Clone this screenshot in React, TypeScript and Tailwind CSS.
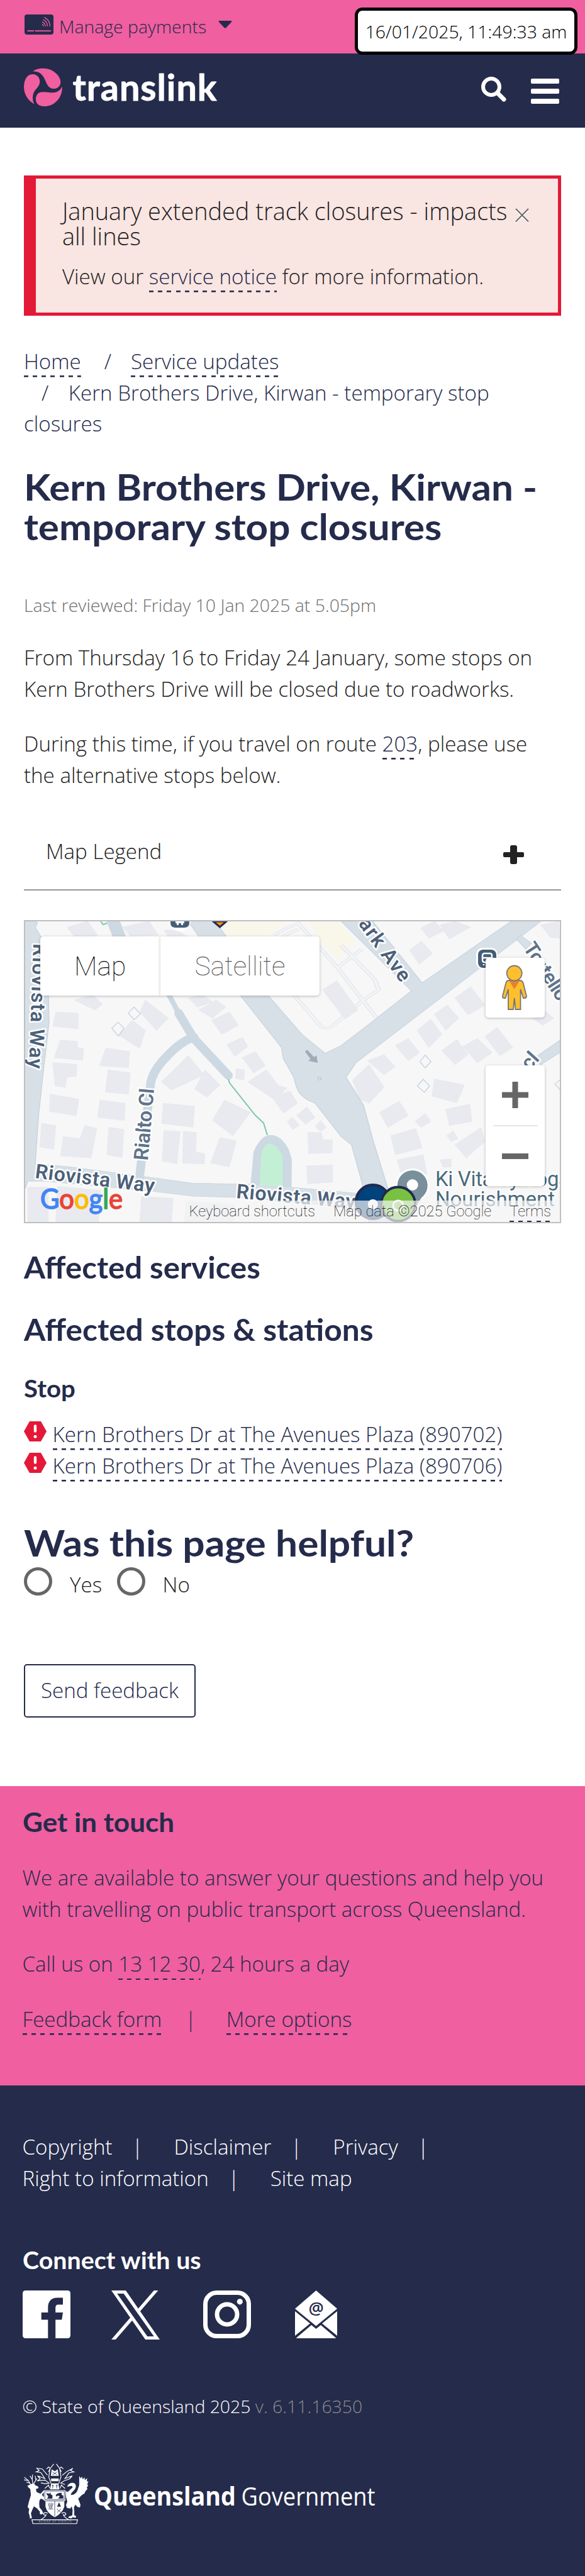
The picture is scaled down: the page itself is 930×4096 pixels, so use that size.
import type { ReactNode } from "react";

const sans = "font-['Open_Sans',sans-serif] font-light";
const display = "w-max origin-left font-[Lato,'Open_Sans',sans-serif] font-bold whitespace-nowrap";

function Link({ children, className = "" }: { children: ReactNode; className?: string }) {
  return (
    <a
      href="#"
      className={`bg-[repeating-linear-gradient(90deg,#252b4b_0_7px,transparent_7px_14.2px)] bg-[length:100%_2.6px] bg-bottom bg-no-repeat pb-[3px] text-[#252b4b] ${className}`}
    >
      {children}
    </a>
  );
}

function TopBar() {
  return (
    <div className="relative flex h-[85.2px] bg-[#f05fa0] pl-[39px] text-[#252b4b]">
      <svg className="mt-[23px] h-8 w-[46px] shrink-0" viewBox="0 0 46 32">
        <rect width="46" height="32" rx="4" fill="#252b4b" />
        <path d="M4.5 26.2H15M16.5 26.2H42" stroke="#f05fa0" strokeWidth="1.8" />
        <path
          d="M28 15.2q2 1.6 2 3.6M28 11.6q5 2.6 5 7.2M29.5 8q7 3.6 7 10.8M31.5 4.600q9 4.600 9 14.200"
          fill="none"
          stroke="#f05fa0"
          strokeWidth="1.4"
        />
      </svg>
      <span className="ml-[9px] pt-[21px] text-[28.4px] leading-[42px]">Manage payments</span>
      <svg className="mt-[33px] ml-[19px] h-3 w-[22px]" viewBox="0 0 22 12">
        <path d="M1.500 0H20.500Q22 .5 21 2L12.500 11Q11 12.500 9.500 11L1 2Q0 .5 1.500 0Z" fill="#252b4b" />
      </svg>
      <div className="absolute top-[12px] left-[564px] z-10 flex h-[75px] w-[354px] items-center justify-center rounded-[12px] border-[5px] border-black bg-white text-[28.4px] leading-[42px] whitespace-nowrap text-black">
        16/01/2025, 11:49:33 am
      </div>
    </div>
  );
}

function Header() {
  return (
    <header className="flex h-[118.2px] bg-[#252b4b] pl-[37px]">
      <svg className="mt-[21.500px] h-[80px] w-[320px]" viewBox="0 0 320 80">
        <g transform="scale(.263) translate(-50 -45)" fill="#f05fa0">
          <path d="M108 70C130 50 190 42 230 68C262 88 279 118 275 142C270 170 240 180 220 172C195 165 190 135 175 108C160 82 140 68 108 70Z" />
          <path d="M117 268C85 250 54 215 54 165C54 120 75 87 105 87C135 87 152 110 150 135C148 160 125 175 115 195C105 215 104 245 117 268Z" />
          <path d="M285 160C288 210 262 250 225 270C195 284 150 288 132 262C118 235 128 205 150 197C180 188 215 203 240 197C262 192 278 180 285 160Z" />
        </g>
        <text
          x="78.500"
          y="53"
          textLength="229"
          className="font-[Lato] font-bold"
          fontSize="57.500"
          fill="#fff"
          stroke="#fff"
          strokeWidth="0.800"
          strokeLinejoin="round"
        >
          translink
        </text>
      </svg>
      <svg className="mt-[36.500px] ml-[408px] h-10 w-10" viewBox="0 0 40 40" fill="none" stroke="#fff" strokeLinecap="round">
        <circle cx="16" cy="16" r="13" strokeWidth="6" />
        <path d="M27 27L36 36" strokeWidth="7" />
      </svg>
      <div className="mt-[39.500px] ml-[39px] flex w-[45px] flex-col gap-2">
        <span className="h-2 rounded-[2px] bg-white" />
        <span className="h-2 rounded-[2px] bg-white" />
        <span className="h-2 rounded-[2px] bg-white" />
      </div>
    </header>
  );
}

function Alert() {
  return (
    <section className="relative mt-[76px] h-[222.500px] border-[5px] border-l-[19px] border-[#e31937] bg-[#f9e5e2] pt-[31.200px] pl-[42px] whitespace-nowrap text-[#222]">
      <p className="text-[37.860px] leading-[40.700px]">
        January extended track closures - impacts
        <br />
        all lines
      </p>
      <p className="mt-[18px] text-[33.120px] leading-[49.700px]">
        View our <Link>service notice</Link> for more information.
      </p>
      <svg className="absolute top-[47px] right-[46px] h-6 w-[22px]" viewBox="0 0 22 24" fill="none" strokeWidth="1.800">
        <path d="M1 3.500L21 23.500M21 3.500L1 23.500" stroke="#fff" />
        <path d="M1 1L21 21.500M21 1L1 21.500" stroke="#666" />
      </svg>
    </section>
  );
}

const homes =
  "180,72 235,42 262,110 210,140|165,130 215,110 240,160 190,190|200,430 250,405 275,450 255,480|390,430 452,520 420,580 375,490|355,530 390,580 375,670 320,605|150,490 210,495 210,572 142,560|162,628 208,635 208,665 225,670 222,728 146,715|284,668 348,685 345,765 267,755|142,740 207,748 205,808 180,810 175,862 148,855|290,775 350,790 345,895 283,885|135,895 212,920 205,1002 133,980|268,925 336,940 334,1025 262,1010|438,940 522,955 518,1058 434,1040|505,705 548,800 460,875 433,835|550,775 590,850 555,910 522,870|602,925 672,985 625,1100 570,1025|112,1040 150,1050 145,1168 107,1155|228,1050 260,1065 245,1210 163,1200 170,1105 215,1115|292,1058 333,1070 328,1208 287,1195|440,1075 483,1080 475,1240 435,1225|492,1078 527,1085 525,1180 550,1190 548,1240 490,1235|590,1110 634,1125 615,1255 565,1235|633,770 656,775 654,825 632,818|665,835 715,775 745,850 770,865 738,925|730,910 778,880 798,940 760,990|770,1030 785,1010 803,1050 785,1070|795,1000 823,958 845,1010 820,1045|845,1055 860,1025 875,1060 860,1080|825,1085 862,1085 866,1120 892,1122 890,1185 828,1188|822,1250 892,1245 892,1330 825,1338|650,715 685,685 712,755 680,790|608,650 650,615 665,660 630,710|568,530 615,490 640,555 595,600|533,480 580,430 606,465 570,520|505,420 545,405 570,440 530,465|865,380 903,335 960,480 925,525|945,825 990,750 1030,860 990,940 965,920|985,730 1030,700 1060,760 1030,800|1060,655 1095,620 1125,690 1095,730|1118,580 1155,525 1185,600 1150,665|1165,500 1200,455 1230,520 1195,580|1220,420 1262,365 1300,455 1255,505|1165,820 1245,850 1225,938 1158,905|1018,985 1070,930 1095,1000 1040,1060|1113,1030 1140,990 1155,1030 1130,1060|1195,970 1260,945 1265,1030 1205,1050|1048,1100 1115,1065 1132,1160 1060,1195|1220,1145 1290,1060 1300,1130 1250,1210|1065,1220 1135,1195 1145,1290 1080,1310|1198,1100 1215,1075 1228,1115 1210,1130|1185,680 1225,625 1255,700 1220,750|1240,660 1280,620 1320,690 1280,740|1300,610 1333,565 1375,665 1340,705|1128,75 1165,42 1190,90 1150,125|1180,60 1220,42 1262,70 1205,130|1098,185 1130,140 1160,200 1125,255|1450,60 1498,42 1500,125 1475,120|1395,480 1430,440 1485,520 1455,555|330,70 400,42 425,110 350,115|440,85 475,85 500,115 450,115|155,1350 270,1370 265,1525 150,1525|380,1400 465,1410 460,1525 375,1525|500,1425 630,1440 625,1525 495,1525|75,1355 130,1355 130,1525 75,1525|1180,1220 1210,1215 1210,1255 1188,1255";

function GoogleMap() {
  return (
    <section className="relative mt-[47.200px] h-[482px] overflow-hidden border-2 border-[#bfbfbf] bg-[#f7f7f7]">
      <svg className="block h-full w-full" viewBox="0 0 850 478" preserveAspectRatio="none">
        <g transform="matrix(.5931 0 0 .322 -40.300 -13.500)">
          <g fill="#f9f6ea">
            <path d="M590 42H765L735 100L700 115H610Z" />
            <path d="M830 42H905L952 135L905 228L850 112Z" />
          </g>
          <g fill="none" stroke="#e0e2e8" strokeWidth="12">
            <path d="M735 110L770 75L800 52L905 270L970 180M790 409L860 560Q880 585 900 545L975 430L1015 380L1005 330L915 160M905 270L1010 520M800 80L760 115" />
          </g>
          <g fill="none" stroke="#f3f4f6" strokeWidth="8">
            <path d="M735 110L770 75L800 52L905 270L970 180M790 409L860 560Q880 585 900 545L975 430L1015 380L1005 330L915 160M905 270L1010 520M800 80L760 115" />
          </g>
          <g fill="#e8eaf0" stroke="#e0e2ea" strokeWidth="1">
            {homes.split("|").map((p) => (
              <polygon key={p} points={p} />
            ))}
          </g>
          <g fill="#d7e0e7" stroke="#c4d0db" strokeWidth="2">
            <path d="M505 42L645 409L755 665L760 720L788 812L795 860Q805 915 845 940L915 1105L943 1147L972 1340L990 1540H1065L1040 1360L1000 1120L975 950L928 812L955 740L1450 42H1370L1132 345L1000 42H915L1103 385L1000 535L915 655L872 693L810 600L720 409L578 42Z" />
            <path d="M60 42H103L95 72L128 170L132 540L118 760L104 1000L95 1238L190 1255L400 1305L515 1335L680 1340L780 1355L960 1385V1465L800 1430L640 1405L520 1400L410 1375L120 1325L75 1325L60 1400Z" />
            <path d="M1395 110L1425 150L1410 180L1385 130ZM1500 630L1430 720L1450 750L1510 680Z" />
          </g>
          <path d="M672 1345L680 1180Q700 1097 725 1097Q755 1097 775 1170L783 1220L782 1355Z" fill="#cdd9e2" />
          <path d="M697 1347L700 1210Q705 1140 724 1140Q742 1140 758 1205V1349Z" fill="#c3f0d5" />
          <g fill="#f7f7f7" stroke="#c9d5e3" strokeWidth="3">
            <path d="M360 465L377 500L360 527L344 495ZM317 540L333 570L318 608L300 570ZM1140 702L1156 735L1140 765L1126 735ZM1135 822L1152 855L1138 886L1119 855ZM1505 820L1488 845L1505 880Z" />
          </g>
          <path d="M818 685L824 676L842 712L849 704L852 741L826 730L833 722Z" fill="#a3a9b8" />
          <ellipse cx="857" cy="818" rx="4" ry="8" fill="none" stroke="#b8c2d0" strokeWidth="2" />
        </g>
        <g fill="none" stroke="#cdd9e2" strokeLinecap="round" strokeLinejoin="round">
          <path d="M138 -5L150 25" strokeWidth="20" />
          <path d="M227 114L244 146" strokeWidth="8" />
          <path d="M244 146L268 186L323 245" strokeWidth="14" />
          <path d="M268 184Q246 192 226 214Q200 240 199 262L182 405" strokeWidth="14" />
        </g>
        <path d="M323 251L325 257L366 308.500L379 320.500L385 340" fill="none" stroke="#7cc8a8" strokeWidth="2" />
        <path d="M120 0L124 5L130 3" fill="none" stroke="#7cc8a8" strokeWidth="2" />

        <circle cx="246" cy="-1" r="17" fill="#fff" />
        <path d="M231 0H261V2Q261 10 253 10H239Q231 10 231 2Z" fill="#455d78" />
        <path d="M239 0H253V3H251V6H248V3H244V6H241V3H239Z" fill="#fff" />
        <path d="M299 0L309.500 9L320 0Z" fill="#f7941d" stroke="#252b4b" strokeWidth="3" />
        <rect x="717" y="42" width="34" height="34" rx="10" fill="#fff" />
        <rect x="720" y="45" width="29" height="29" rx="8" fill="#455d78" />
        <rect x="727" y="51" width="15" height="14" rx="3" fill="none" stroke="#fff" strokeWidth="2.500" />
        <path d="M728 58H741M729 68V70M740 68V70" stroke="#fff" strokeWidth="2.500" />

        <g
          className="font-[Roboto]"
          fontWeight="600"
          fontSize="32"
          fill="#4c6078"
          stroke="#fff"
          strokeWidth="5"
          strokeLinejoin="round"
          paintOrder="stroke"
        >
          <text transform="translate(13 35) rotate(92)" textLength="199">Riovista Way</text>
          <text transform="translate(195 381) rotate(-85)" textLength="115" fill="#5f7389">Rialto Cl</text>
          <text transform="translate(15 408) rotate(7)" textLength="191">Riovista Way</text>
          <text transform="translate(335 440) rotate(5)" textLength="190">Riovista Way</text>
          <text transform="translate(516 -14) rotate(54)" textLength="139">Park Ave</text>
          <text transform="translate(791 42) rotate(57)" textLength="138" fill="#5f7389">Tortello Cl</text>
          <text transform="translate(802 238) rotate(-48)" fill="#5f7389">cl</text>
          <text transform="translate(20 -6) rotate(30)" fontSize="18">y</text>
        </g>

        <circle cx="615.700" cy="420" r="27" fill="#fff" />
        <circle cx="615.700" cy="420" r="24" fill="#7a8f9c" />
        <path d="M600 436L616 462L632 436Z" fill="#7a8f9c" />
        <circle cx="615.700" cy="419" r="9" fill="#fff" />
        <g className="font-[Roboto]" fontSize="33" fontWeight="400" fill="#4b6b7a" stroke="#fff" strokeWidth="4" strokeLinejoin="round" paintOrder="stroke">
          <text x="652" y="421" textLength="214">Ki Vitality Yoga</text>
          <text x="652" y="453" textLength="190">Nourishment</text>
        </g>
        <g stroke="#1f2a4d" strokeWidth="4">
          <circle cx="552.800" cy="446" r="27" fill="#00427c" />
          <circle cx="593" cy="449.500" r="27" fill="#7ac143" />
        </g>
        <circle cx="552.800" cy="450" r="8" fill="#fff" />
        <circle cx="593" cy="452" r="8" fill="none" stroke="#fff" strokeWidth="3" />

        <text className="font-[Lato]" x="24" y="457" fontSize="44" fontWeight="400" strokeWidth="1.600" textLength="131" lengthAdjust="spacingAndGlyphs">
          <tspan fill="#4285f4" stroke="#4285f4">G</tspan>
          <tspan fill="#ea4335" stroke="#ea4335">o</tspan>
          <tspan fill="#fbbc05" stroke="#fbbc05">o</tspan>
          <tspan fill="#4285f4" stroke="#4285f4">g</tspan>
          <tspan fill="#34a853" stroke="#34a853">l</tspan>
          <tspan fill="#ea4335" stroke="#ea4335">e</tspan>
        </text>
      </svg>

      <div className="absolute top-[24px] left-[24px] flex h-[94px] font-[Roboto] text-[42.600px] leading-[94px] font-thin">
        <div className="w-[190.500px] rounded-l-[5px] bg-white pl-[54px] text-black shadow-[0_1px_4px_rgba(0,0,0,0.25)]">Map</div>
        <div className="w-[253px] rounded-r-[5px] bg-white pl-[55px] text-[#565656] shadow-[0_1px_4px_rgba(0,0,0,0.25)]">Satellite</div>
      </div>

      <div className="absolute top-[58.500px] right-[24px] h-[95px] w-[94px] rounded-[5px] bg-white shadow-[0_1px_4px_rgba(0,0,0,0.25)]">
        <svg className="h-full w-full" viewBox="0 0 94 95">
          <path
            d="M37 36H54Q59 36 60 41L65 61Q65 64 62 64H60L55.500 50V82H47.500L45.800 64L44 82H36V50L31.500 64H29Q26.500 64 27 61L32 41Q33 36 37 36Z"
            fill="#fdbf2d"
            stroke="#767676"
            strokeWidth="1.800"
          />
          <path d="M37.500 36.500H54L45.700 50Z" fill="#e4812f" />
          <circle cx="45.700" cy="24.500" r="12" fill="#fdbf2d" stroke="#767676" strokeWidth="1.800" />
        </svg>
      </div>

      <div className="absolute top-[229px] right-[24px] flex h-[192px] w-[94px] flex-col items-center rounded-[5px] bg-white shadow-[0_1px_4px_rgba(0,0,0,0.25)]">
        <svg className="h-[95px] w-full" viewBox="0 0 94 95" stroke="#666" strokeWidth="9">
          <path d="M26 47H68M47 26V68" />
        </svg>
        <div className="h-[2px] w-[71px] bg-[#e6e6e6]" />
        <svg className="h-[95px] w-full" viewBox="0 0 94 95" stroke="#666" strokeWidth="9">
          <path d="M26 47.500H68" />
        </svg>
      </div>

      <div className="absolute right-0 bottom-0 flex h-[34px] gap-[29px] bg-[#f5f5f5]/70 pr-[14px] pl-[10px] font-[Roboto] text-[23.660px] leading-[35px] font-thin whitespace-nowrap text-black">
        <span>Keyboard shortcuts</span>
        <span>Map data ©2025 Google</span>
        <span className="bg-[repeating-linear-gradient(90deg,#252b4b_0_7px,transparent_7px_14.200px)] bg-[length:100%_2px] bg-bottom bg-no-repeat">Terms</span>
      </div>
    </section>
  );
}

function AlertHexagon() {
  return (
    <svg className="mt-[4px] h-8 w-9 shrink-0" viewBox="0 0 36 32">
      <path d="M9 0H27L36 16L27 32H9L0 16Z" fill="#e31937" />
      <path d="M18 7.500V15.500" stroke="#fff" strokeWidth="4.400" strokeLinecap="round" />
      <circle cx="18" cy="24.300" r="2.500" fill="#fff" />
    </svg>
  );
}

function StopRow({ name }: { name: string }) {
  return (
    <li className="flex h-[49.700px]">
      <AlertHexagon />
      <span className="ml-[9.500px] whitespace-nowrap">
        <Link>{name}</Link>
      </span>
    </li>
  );
}

function Bar() {
  return <span className="mr-[49px] ml-[31px]">|</span>;
}

function SocialIcons() {
  return (
    <div className="mt-[23px] flex h-[78px] items-start">
      <svg className="h-[76px] w-[76px]" viewBox="0 0 76 76">
        <rect width="76" height="76" rx="4.500" fill="#fff" />
        <path d="M40.300 76V46.500H29.700V35H40.300V27C40.300 17 46 11.600 55 11.600H64V22.500H57C53.500 22.500 52.200 24.500 52.200 28V35H64L62.300 46.500H52.200V76Z" fill="#252b4b" />
      </svg>
      <svg className="ml-[65px] h-[78px] w-[77px]" viewBox="0 0 1200 1227" preserveAspectRatio="none" fill="#fff">
        <path d="M714.163 519.284L1160.890 0H1055.030L667.137 450.887L357.328 0H0L468.492 681.821L0 1226.370H105.866L515.491 750.218L842.672 1226.370H1200L714.137 519.284H714.163ZM569.165 687.828L521.697 619.934L144.011 79.694H306.615L611.412 515.685L658.880 583.579L1055.080 1150.300H892.476L569.165 687.854V687.828Z" />
      </svg>
      <svg className="ml-[69px] h-[76px] w-[76px]" viewBox="0 0 76 76" fill="none" stroke="#fff">
        <rect x="3.500" y="3.500" width="69" height="69" rx="18" strokeWidth="7" />
        <circle cx="38" cy="38" r="16" strokeWidth="7" />
        <circle cx="58.300" cy="17.800" r="4.600" fill="#fff" stroke="none" />
      </svg>
      <svg className="ml-[70px] h-[76px] w-[67px]" viewBox="0 0 67 76" fill="#fff">
        <path d="M33.500 0L67 29L33.500 56.500L0 29Z" />
        <path d="M0 33V72L24 52.500ZM67 33V72L43 52.500ZM2.500 76Q2 75.500 2.500 75L26 55L33.500 61L41 55L64.500 75Q65 75.500 64.500 76Z" />
        <text x="33.500" y="37.500" textAnchor="middle" fontSize="27" fontWeight="600" fill="#252b4b" className="font-['Open_Sans']">
          @
        </text>
      </svg>
    </div>
  );
}

function CoatOfArms() {
  return (
    <svg className="h-[98.600px] w-[106.500px] shrink-0" viewBox="50 45 405 375">
      <g fill="#fff">
        <path d="M79 184L104 172L118 170L128 182L143 188L146 197L136 203L130 201L134 222L158 232L176 212L181 220L166 238L178 252L184 260L182 270L160 262L152 272L150 292L152 315L166 332L176 352L160 358L152 350L156 343L136 320L118 308L108 330L100 350L106 380L94 382L92 365L86 345L90 325L80 312L88 280L100 240L96 204L84 193Z" />
        <path d="M318 190Q330 165 352 166Q372 168 372 188Q370 206 352 220Q340 232 342 240Q372 238 382 210L392 180L392 125L402 140L408 128L414 146L424 132L426 150L440 138L438 158L448 156L440 176L446 180L438 196L442 204L430 216L424 230L408 240L386 262L400 300L396 315L382 312L368 298L360 316L362 340L362 362L374 368L370 378L352 374L344 382L326 378L328 370L350 364L352 330L346 308L338 322L318 318L312 300L320 280L312 250L310 215L322 222L334 210L352 194Q350 182 340 186Z" />
        <path d="M178 210H308V274H302V310Q290 350 244 374Q198 350 188 310V274H178Z" />
        <path d="M222 170H266L272 206H216ZM222 140H268V156H222ZM226 84L244 96L262 84L268 124H220Z" />
      </g>
      <g fill="none" stroke="#fff" strokeWidth="4.500">
        <path d="M98 176L84 152L60 132M84 152L58 148M94 168L72 162M112 172L108 146L94 124M108 146L110 116M118 170L130 150L126 124M130 150L136 140" />
        <path d="M238 52L216 80L208 130L222 170M254 52L274 80L282 130L268 170M194 82L208 70L216 80L206 100M296 82L282 70L274 80L284 100" />
        <path d="M200 120L168 82L136 78L150 92L132 100L160 104L184 140L140 124L156 142L138 154L186 150L210 168L186 172L160 166M290 120L320 96L354 78L340 92L360 100L330 106L306 140L350 124L334 142L300 154L280 168L306 176M184 200L206 180L214 200M306 200L284 180L276 200" />
        <path d="M202 350Q184 340 176 354Q180 366 192 360Q184 378 160 388M286 350Q304 340 312 354Q308 366 296 360Q304 378 328 388" />
        <path d="M106 390H382L376 413H112Z" />
      </g>
      <g fill="none" stroke="#252b4b" strokeWidth="3">
        <path d="M184 216H302V268H184ZM190 276H300M244 276V368M232 176V200M226 184H238M256 176V200M250 184H262M220 134H268M222 160H268M230 100L258 118M258 100L230 118" />
        <path d="M206 290L212 318H226L234 290M214 286L218 312M226 286L222 312M206 324H234M256 324L282 346M282 324L258 346" />
      </g>
      <g fill="#252b4b">
        <path d="M194 226Q206 236 222 226Q214 240 230 240V262H196Q206 256 204 246Q194 240 194 226ZM250 240Q264 222 290 228Q276 236 296 244V262H262Q276 254 272 246Q260 240 254 250Z" />
        <path d="M270 284L282 310H258Z" />
      </g>
      <text x="146" y="408" fontSize="19" textLength="200" fill="#fff" opacity=".8" className="font-['Open_Sans']">
        AUDAX AT FIDELIS
      </text>
    </svg>
  );
}

export default function App() {
  return (
    <div className={`w-[930px] overflow-hidden bg-white text-[33.120px] leading-[49.700px] ${sans}`}>
      <TopBar />
      <Header />
      <main className="px-[38px] text-[#222]">
        <Alert />

        <nav className="mt-[48.200px] whitespace-nowrap text-[#252b4b]">
          <Link>Home</Link>
          <span className="mr-[31px] ml-[37px]">/</span>
          <Link>Service updates</Link>
          <br />
          <span className="mr-[31.500px] ml-[28px]">/</span>
          Kern Brothers Drive, Kirwan - temporary stop
          <br />
          closures
        </nav>

        <h1 className={`mt-[42.600px] scale-x-[1.079] text-[57.500px] leading-[63.700px] text-[#252b4b] ${display}`}>
          Kern Brothers Drive, Kirwan -
          <br />
          temporary stop closures
        </h1>

        <p className="mt-[71.900px] text-[28.400px] leading-[42.600px] text-[#6e6e6e]">Last reviewed: Friday 10 Jan 2025 at 5.05pm</p>

        <p className="mt-[37.500px] whitespace-nowrap">
          From Thursday 16 to Friday 24 January, some stops on
          <br />
          Kern Brothers Drive will be closed due to roadworks.
        </p>
        <p className="mt-[37.500px] whitespace-nowrap">
          During this time, if you travel on route <Link>203</Link>, please use
          <br />
          the alternative stops below.
        </p>

        <div className="mt-[23.600px] flex h-[134.500px] justify-between border-b-2 border-[#969696] pt-[47.900px] pr-[59px] pl-[35px]">
          <span>Map Legend</span>
          <svg className="mt-[15.500px] h-[30px] w-[33px]" viewBox="0 0 33 30" fill="#222">
            <rect y="11" width="33" height="8" rx="2" />
            <rect x="11" width="11" height="30" rx="3" />
          </svg>
        </div>

        <GoogleMap />

        <h2 className={`mt-[40.600px] scale-x-[1.046] text-[47px] leading-[60px] text-[#252b4b] ${display}`}>Affected services</h2>
        <h2 className={`mt-[39px] scale-x-[1.055] text-[47px] leading-[60px] text-[#252b4b] ${display}`}>Affected stops &amp; stations</h2>
        <h3 className={`mt-[38.500px] scale-x-[1.070] text-[37.500px] leading-[50px] text-[#252b4b] ${display}`}>Stop</h3>
        <ul className="mt-[23px]">
          <StopRow name="Kern Brothers Dr at The Avenues Plaza (890702)" />
          <StopRow name="Kern Brothers Dr at The Avenues Plaza (890706)" />
        </ul>

        <h2 className={`mt-[66px] scale-x-[1.083] text-[57.500px] leading-[64px] text-[#252b4b] ${display}`}>Was this page helpful?</h2>
        <div className="mt-[7.200px] flex h-[45px]">
          <span className="h-[45px] w-[45px] rounded-full border-[5px] border-[#666]" />
          <span className="ml-[28px] pt-[2.700px]">Yes</span>
          <span className="ml-[23.500px] h-[45px] w-[45px] rounded-full border-[5px] border-[#666]" />
          <span className="ml-[28px] pt-[2.700px]">No</span>
        </div>

        <button className="mt-[109px] flex h-[85px] w-[273px] items-center justify-center rounded-[5px] border-2 border-[#252b4b] pb-[2px] text-[#252b4b]">
          Send feedback
        </button>
      </main>

      <section className="mt-[108.600px] h-[475.700px] bg-[#f05fa0] pt-[32.300px] pl-[35.500px] whitespace-nowrap text-[#252b4b]">
        <h3 className={`scale-x-[1.040] text-[42.300px] leading-[50px] ${display}`}>Get in touch</h3>
        <p className="mt-[38.800px]">
          We are available to answer your questions and help you
          <br />
          with travelling on public transport across Queensland.
        </p>
        <p className="mt-[37.800px]">
          Call us on <Link>13 12 30</Link>, 24 hours a day
        </p>
        <p className="mt-[38px]">
          <Link>Feedback form</Link>
          <span className="mr-[47.500px] ml-[37px]">|</span>
          <Link>More options</Link>
        </p>
      </section>

      <footer className="h-[781px] bg-[#252b4b] pt-[73.500px] pl-[35.500px] whitespace-nowrap text-white">
        <p>
          Copyright
          <Bar />
          Disclaimer
          <Bar />
          Privacy
          <Bar />
          <br />
          Right to information
          <Bar />
          Site map
        </p>
        <h3 className={`mt-[80px] scale-x-[1.045] text-[37.700px] leading-[50px] ${display}`}>Connect with us</h3>
        <SocialIcons />
        <p className="mt-[85px] text-[28.400px] leading-[42.600px]">
          © State of Queensland 2025 <span className="text-[#8c8c8c]">v. 6.11.16350</span>
        </p>
        <div className="mt-[68.500px] flex">
          <CoatOfArms />
          <svg className="h-[98px] w-[460px]" viewBox="0 0 460 98" fill="#fff">
            <text x="7" y="68" fontSize="40.500" fontWeight="700" textLength="226" lengthAdjust="spacingAndGlyphs" className="font-['Open_Sans']">
              Queensland
            </text>
            <text x="241.500" y="68" fontSize="40.500" fontWeight="400" textLength="213" lengthAdjust="spacingAndGlyphs" className="font-['Open_Sans']">
              Government
            </text>
          </svg>
        </div>
      </footer>
    </div>
  );
}
